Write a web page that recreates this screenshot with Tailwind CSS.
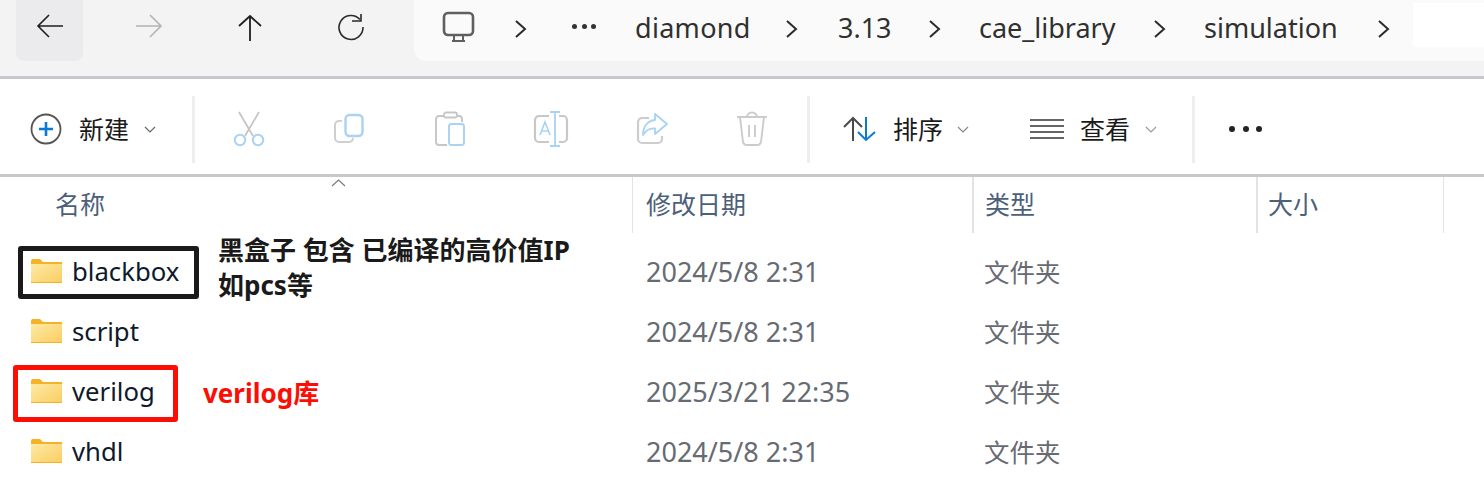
<!DOCTYPE html>
<html lang="zh">
<head>
<meta charset="utf-8">
<script src="https://cdn.jsdelivr.net/npm/@tailwindcss/browser@4"></script>
</head>
<body class="bg-white">
<svg class="absolute w-0 h-0"><defs><linearGradient id="fg" x1="0" y1="0" x2="1" y2="1"><stop offset="0" stop-color="#fdeaa6"/><stop offset="1" stop-color="#fbcd62"/></linearGradient></defs></svg>
<div class="relative w-[1484px] h-[485px] overflow-hidden bg-white text-[26px] text-[#1c1c1c] font-['Noto_Sans','Noto_Sans_CJK_SC',sans-serif]">

  <!-- nav bar -->
  <div class="flex h-[79px] bg-[#f3f3f3] border-b-[3px] border-[#c8c8cc]">
    <div class="flex h-[61px] shrink-0">
      <div class="ml-[16px] w-[67px] h-[61px] pb-[9px] bg-[#ebebed] rounded-b-lg flex items-center justify-center">
        <svg class="w-[28px] h-[26px]" viewBox="0 0 28 26" fill="none" stroke="#1f1f1f" stroke-width="1.6"><path d="M27 13H2M13 2L2 13L13 24"/></svg>
      </div>
      <div class="w-[132px] pb-[9px] flex items-center justify-center">
        <svg class="w-[28px] h-[26px]" viewBox="0 0 28 26" fill="none" stroke="#b4b4b4" stroke-width="1.6"><path d="M1 13H26M15 2L26 13L15 24"/></svg>
      </div>
      <div class="w-[70px] pb-[6px] flex items-center justify-center">
        <svg class="w-[26px] h-[28px]" viewBox="0 0 26 28" fill="none" stroke="#1f1f1f" stroke-width="1.8"><path d="M13 27V2M2 12L13 2L24 12"/></svg>
      </div>
      <div class="ml-[3px] w-[126px] pb-[7px] flex items-center justify-center">
        <svg class="w-[28px] h-[28px]" viewBox="0 0 28 28" fill="none" stroke="#2a2a2a" stroke-width="1.6"><path d="M23 6.500A12 12 0 1 0 26 14"/><path d="M15 8H24V1"/></svg>
      </div>
    </div>
    <div class="flex flex-1 items-center h-[61px] pb-[4px] bg-[#fafafa] rounded-bl-xl text-[27px] text-[#303030]">
      <svg class="ml-[28px] w-[33px] h-[33px] mt-[-2px] shrink-0" viewBox="0 0 33 33" fill="none" stroke="#5f5f5f" stroke-width="2.600"><rect x="2" y="2" width="29" height="22" rx="4"/><path d="M10 30H23M12 24V30M21 24V30" stroke-width="2"/></svg>
      <svg class="ml-[39px] w-[13px] h-[20px] shrink-0" viewBox="0 0 13 20" fill="none" stroke="#2b2b2b" stroke-width="2"><path d="M2 2L11 10L2 18"/></svg>
      <div class="ml-[45px] w-[24px] flex justify-between shrink-0 mt-[-5px]"><span class="w-[5px] h-[5px] rounded-full bg-[#333]"></span><span class="w-[5px] h-[5px] rounded-full bg-[#333]"></span><span class="w-[5px] h-[5px] rounded-full bg-[#333]"></span></div>
      <span class="ml-[39px] w-[114px] shrink-0 tracking-[0.3px]">diamond</span>
      <svg class="ml-[36px] w-[13px] h-[20px] shrink-0" viewBox="0 0 13 20" fill="none" stroke="#2b2b2b" stroke-width="2"><path d="M2 2L11 10L2 18"/></svg>
      <span class="ml-[40px] w-[52px] shrink-0">3.13</span>
      <svg class="ml-[38px] w-[13px] h-[20px] shrink-0" viewBox="0 0 13 20" fill="none" stroke="#2b2b2b" stroke-width="2"><path d="M2 2L11 10L2 18"/></svg>
      <span class="ml-[38px] w-[135px] shrink-0">cae_library</span>
      <svg class="ml-[39px] w-[13px] h-[20px] shrink-0" viewBox="0 0 13 20" fill="none" stroke="#2b2b2b" stroke-width="2"><path d="M2 2L11 10L2 18"/></svg>
      <span class="ml-[38px] w-[133px] shrink-0">simulation</span>
      <svg class="ml-[40px] w-[13px] h-[20px] shrink-0" viewBox="0 0 13 20" fill="none" stroke="#2b2b2b" stroke-width="2"><path d="M2 2L11 10L2 18"/></svg>
      <div class="ml-auto self-start mt-[3px] w-[71px] h-[44px] bg-white"></div>
    </div>
  </div>

  <!-- toolbar -->
  <div class="flex items-center h-[98px] pt-[5px] border-b-[3px] border-[#c8c8cc]">
    <svg class="ml-[30px] w-[32px] h-[32px] shrink-0" viewBox="0 0 32 32" fill="none"><circle cx="16" cy="16" r="14.500" stroke="#555" stroke-width="1.800"/><path d="M16 9V23M9 16H23" stroke="#0a78d4" stroke-width="2.600"/></svg>
    <span class="ml-[17px] w-[52px] shrink-0 text-[25px] leading-none text-[#1a1a1a]">新建</span>
    <svg class="ml-[13px] w-[12px] h-[7px] shrink-0" viewBox="0 0 12 7" fill="none" stroke="#666" stroke-width="1.200"><path d="M1 1L6 6L11 1"/></svg>
    <div class="ml-[36px] w-[3px] h-[67px] bg-[#eeeeee] shrink-0"></div>

    <div class="w-[108px] flex justify-center shrink-0">
      <svg class="w-[32px] h-[36px]" viewBox="0 0 32 36" fill="none"><path d="M6 1L20 25M26 1L12 25" stroke="#c4c4c4" stroke-width="1.700"/><circle cx="7" cy="29" r="5.200" stroke="#a9d2f3" stroke-width="2"/><circle cx="25" cy="29" r="5.200" stroke="#a9d2f3" stroke-width="2"/></svg>
    </div>
    <div class="w-[92px] flex justify-center shrink-0">
      <svg class="w-[32px] h-[32px]" viewBox="0 0 32 32" fill="none"><path d="M9 8H6A4 4 0 0 0 2 12V25A4 4 0 0 0 6 29H16A4 4 0 0 0 20 25" stroke="#cfcfcf" stroke-width="2"/><rect x="12.500" y="2" width="17" height="21" rx="4" stroke="#a9d2f3" stroke-width="2.400"/></svg>
    </div>
    <div class="w-[110px] flex justify-center shrink-0">
      <svg class="w-[32px] h-[36px]" viewBox="0 0 32 36" fill="none"><path d="M10 5H5A3 3 0 0 0 2 8V31A3 3 0 0 0 5 34H13M23 5H25A3 3 0 0 1 28 8V11" stroke="#c6c6c6" stroke-width="1.900"/><rect x="10" y="1.500" width="13" height="5" rx="2" stroke="#c6c6c6" stroke-width="1.800"/><rect x="15" y="13" width="15" height="21" rx="2.500" stroke="#a9d2f3" stroke-width="1.900"/></svg>
    </div>
    <div class="w-[92px] flex justify-center shrink-0">
      <svg class="w-[36px] h-[36px]" viewBox="0 0 36 36" fill="none"><path d="M16 5H6A4 4 0 0 0 2 9V27A4 4 0 0 0 6 31H16M26 5H30A4 4 0 0 1 34 9V27A4 4 0 0 1 30 31H26" stroke="#c8c8c8" stroke-width="2.200"/><path d="M17 1H27M22 1V35M17 35H27" stroke="#a9d2f3" stroke-width="1.800"/><path d="M7 24L12 11L17 24M9 20H15" stroke="#a9d2f3" stroke-width="1.600"/></svg>
    </div>
    <div class="w-[110px] flex justify-center shrink-0">
      <svg class="w-[32px] h-[32px]" viewBox="0 0 32 32" fill="none"><path d="M13 5H6A4 4 0 0 0 2 9V26A4 4 0 0 0 6 30H22A4 4 0 0 0 26 26V23" stroke="#cdcdcd" stroke-width="2.200"/><path d="M19 1L31 11L19 21V15.500C14 15 10 17 7 22C7 14 11 8 19 7Z" stroke="#a9d2f3" stroke-width="1.800" stroke-linejoin="round"/></svg>
    </div>
    <div class="w-[90px] flex justify-center shrink-0">
      <svg class="w-[32px] h-[36px]" viewBox="0 0 32 36" fill="none" stroke="#cccccc" stroke-width="1.900"><path d="M1 6H31M11 6A5 4.500 0 0 1 21 6"/><path d="M4 6L7 31A4 4 0 0 0 11 34H21A4 4 0 0 0 25 31L28 6"/><path d="M13 14V26M19 14V26"/></svg>
    </div>
    <div class="ml-[10px] w-[3px] h-[67px] bg-[#eeeeee] shrink-0"></div>

    <svg class="ml-[33px] w-[34px] h-[26px] shrink-0" viewBox="0 0 34 26" fill="none" stroke-width="2"><path d="M10 25V2M1 11L10 2L19 11" stroke="#4a4a4a"/><path d="M23 1V24M15 16L23 24L32 16" stroke="#0a78d4"/></svg>
    <span class="ml-[16px] w-[52px] shrink-0 text-[25px] leading-none text-[#1a1a1a]">排序</span>
    <svg class="ml-[12px] w-[12px] h-[7px] shrink-0" viewBox="0 0 12 7" fill="none" stroke="#888" stroke-width="1.200"><path d="M1 1L6 6L11 1"/></svg>
    <svg class="ml-[61px] w-[34px] h-[22px] shrink-0" viewBox="0 0 34 22" fill="none" stroke="#666" stroke-width="1.800"><path d="M0 2H34M0 8H34M0 14H34M0 20H34"/></svg>
    <span class="ml-[16px] w-[52px] shrink-0 text-[25px] leading-none text-[#1a1a1a]">查看</span>
    <svg class="ml-[13px] w-[12px] h-[7px] shrink-0" viewBox="0 0 12 7" fill="none" stroke="#999" stroke-width="1.200"><path d="M1 1L6 6L11 1"/></svg>
    <div class="ml-[35px] w-[3px] h-[67px] bg-[#eeeeee] shrink-0"></div>
    <div class="ml-[34px] w-[33px] flex justify-between shrink-0"><span class="w-[6px] h-[6px] rounded-full bg-[#222]"></span><span class="w-[6px] h-[6px] rounded-full bg-[#222]"></span><span class="w-[6px] h-[6px] rounded-full bg-[#222]"></span></div>
  </div>

  <!-- header -->
  <div class="relative grid grid-cols-[632px_340px_284px_188px] h-[56px] text-[25px] text-[#4c607a]">
    <div class="pl-[55px] flex items-center">名称</div>
    <div class="pl-[13px] flex items-center border-l-[1px] border-[#e3e3e3]">修改日期</div>
    <div class="pl-[11px] flex items-center border-l-2 border-[#e3e3e3]">类型</div>
    <div class="pl-[10px] flex items-center border-l-2 border-r-[1px] border-[#e3e3e3]">大小</div>
    <svg class="absolute left-[331px] top-[2px] w-[15px] h-[8px]" viewBox="0 0 15 8" fill="none" stroke="#777" stroke-width="1.100"><path d="M1 7L7.500 1L14 7"/></svg>
  </div>

  <!-- rows -->
  <div class="pt-[9px] text-[#666b73] text-[27px]">
    <div class="grid grid-cols-[632px_340px_284px_188px] h-[60px] items-center">
      <div class="flex items-center pl-[31px] text-[25.700px] text-[#0e1a2b]">
        <svg class="w-[31px] h-[24px] -mt-[2px] shrink-0" viewBox="0 0 31 24"><path d="M0 2A2 2 0 0 1 2 0H9L12 3H31V24H0Z" fill="#f5b225"/><path d="M0 5H31V23H0Z" fill="url(#fg)"/></svg>
        <span class="ml-[10px]">blackbox</span>
      </div>
      <div class="pl-[14px]">2024/5/8 2:31</div><div class="pl-[12px] text-[25.500px]">文件夹</div><div></div>
    </div>
    <div class="grid grid-cols-[632px_340px_284px_188px] h-[60px] items-center">
      <div class="flex items-center pl-[31px] text-[25.700px] text-[#0e1a2b]">
        <svg class="w-[31px] h-[24px] -mt-[2px] shrink-0" viewBox="0 0 31 24"><path d="M0 2A2 2 0 0 1 2 0H9L12 3H31V24H0Z" fill="#f5b225"/><path d="M0 5H31V23H0Z" fill="url(#fg)"/></svg>
        <span class="ml-[10px]">script</span>
      </div>
      <div class="pl-[14px]">2024/5/8 2:31</div><div class="pl-[12px] text-[25.500px]">文件夹</div><div></div>
    </div>
    <div class="grid grid-cols-[632px_340px_284px_188px] h-[60px] items-center">
      <div class="flex items-center pl-[31px] text-[25.700px] text-[#0e1a2b]">
        <svg class="w-[31px] h-[24px] -mt-[2px] shrink-0" viewBox="0 0 31 24"><path d="M0 2A2 2 0 0 1 2 0H9L12 3H31V24H0Z" fill="#f5b225"/><path d="M0 5H31V23H0Z" fill="url(#fg)"/></svg>
        <span class="ml-[10px]">verilog</span>
      </div>
      <div class="pl-[14px]">2025/3/21 22:35</div><div class="pl-[12px] text-[25.500px]">文件夹</div><div></div>
    </div>
    <div class="grid grid-cols-[632px_340px_284px_188px] h-[60px] items-center">
      <div class="flex items-center pl-[31px] text-[25.700px] text-[#0e1a2b]">
        <svg class="w-[31px] h-[24px] -mt-[2px] shrink-0" viewBox="0 0 31 24"><path d="M0 2A2 2 0 0 1 2 0H9L12 3H31V24H0Z" fill="#f5b225"/><path d="M0 5H31V23H0Z" fill="url(#fg)"/></svg>
        <span class="ml-[10px]">vhdl</span>
      </div>
      <div class="pl-[14px]">2024/5/8 2:31</div><div class="pl-[12px] text-[25.500px]">文件夹</div><div></div>
    </div>
  </div>

  <!-- annotations -->
  <div class="absolute left-[18px] top-[246px] w-[181px] h-[53px] border-[5px] border-[#1a1a1a] rounded-[3px]"></div>
  <div class="absolute left-[13px] top-[365px] w-[165px] h-[57px] border-[5px] border-[#fb0f05] rounded-[3px]"></div>
  <div class="absolute left-[218px] top-[233px] text-[26px] font-bold leading-[35px] text-[#1a1a1a]">黑盒子 包含 已编译的高价值IP<br>如pcs等</div>
  <div class="absolute left-[203px] top-[376px] text-[26px] font-bold leading-[35px] text-[#fb0f05]">verilog库</div>
</div>
</body>
</html>
